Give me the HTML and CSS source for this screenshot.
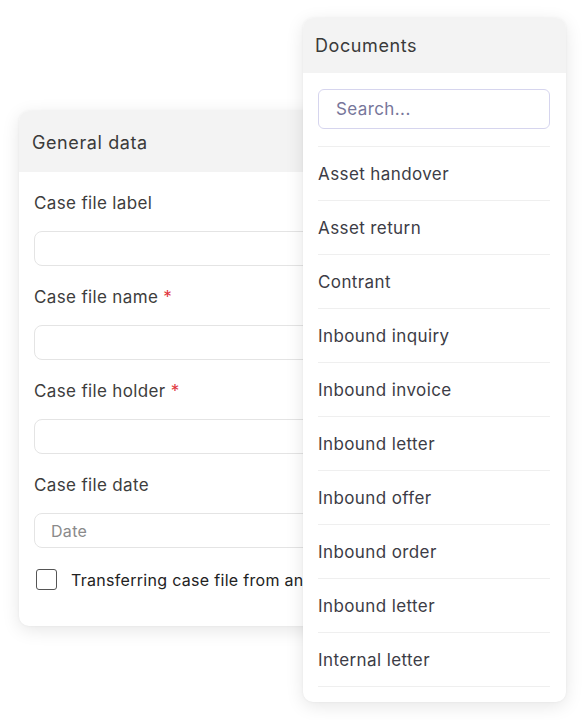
FILE: index.html
```html
<!DOCTYPE html>
<html>
<head>
<meta charset="utf-8">
<link rel="stylesheet" href="styles.css">
</head>
<body>
<div class="stage">
  <section class="card card-general">
    <header class="card-head">General data</header>
    <div class="card-body form">
      <div class="field">
        <label class="label">Case file label</label>
        <div class="input"></div>
      </div>
      <div class="field">
        <label class="label">Case file name <span class="req">*</span></label>
        <div class="input"></div>
      </div>
      <div class="field">
        <label class="label">Case file holder <span class="req">*</span></label>
        <div class="input"></div>
      </div>
      <div class="field">
        <label class="label">Case file date</label>
        <div class="input"><span class="placeholder">Date</span></div>
      </div>
      <div class="check-row">
        <span class="checkbox"></span>
        <span class="check-text">Transferring case file from an old system</span>
      </div>
    </div>
  </section>

  <section class="card card-docs">
    <header class="card-head">Documents</header>
    <div class="card-body docs">
      <div class="search"><span class="search-ph">Search...</span></div>
      <ul class="doc-list">
        <li>Asset handover</li>
        <li>Asset return</li>
        <li>Contrant</li>
        <li>Inbound inquiry</li>
        <li>Inbound invoice</li>
        <li>Inbound letter</li>
        <li>Inbound offer</li>
        <li>Inbound order</li>
        <li>Inbound letter</li>
        <li>Internal letter</li>
      </ul>
    </div>
  </section>
</div>
</body>
</html>
```

FILE: styles.css
```css
* { box-sizing: border-box; }
html, body { margin: 0; padding: 0; background: #ffffff; }
body {
  font-family: "Inter", "Noto Sans", sans-serif;
  color: #3b3b45;
  width: 584px;
  height: 720px;
  overflow: hidden;
}
.stage { position: relative; width: 584px; height: 720px; }

.card {
  position: absolute;
  background: #fff;
  border-radius: 10px;
  box-shadow: 0 4px 18px rgba(0,0,0,0.10), 0 0 3px rgba(0,0,0,0.05);
  overflow: hidden;
}
.card-head {
  background: #f3f3f3;
  font-size: 18px;
  letter-spacing: 0.6px;
  color: #3a3a3a;
  display: flex;
  align-items: center;
}

.card-general { left: 19px; top: 111px; width: 320px; height: 515px; }
.card-general .card-head { height: 61px; padding-left: 13px; padding-top: 1px; }
.form { padding: 19px 0 0 15px; display: flex; flex-direction: column; }
.field { display: flex; flex-direction: column; margin-bottom: 19px; }
.label { font-size: 17px; letter-spacing: 0.35px; color: #3d3d3d; line-height: 24px; margin-bottom: 16px; }
.req { color: #e0353b; }
.input {
  height: 35px;
  width: 320px;
  border: 1.5px solid #e4e4e4;
  border-radius: 8px;
  display: flex;
  align-items: center;
  padding-left: 16px;
}
.placeholder { font-size: 16px; letter-spacing: 0.3px; color: #8a8a8a; }
.check-row { display: flex; align-items: center; gap: 14px; margin-top: 2px; padding-left: 2px; }
.checkbox {
  width: 21px; height: 21px;
  border: 1.5px solid #555;
  border-radius: 3px;
  flex: none;
}
.check-text { font-size: 16px; letter-spacing: 0.3px; color: #222; white-space: nowrap; }

.card-docs { left: 303px; top: 18px; width: 263px; height: 684px; }
.card-docs .card-head { height: 55px; padding-left: 12px; }
.docs { padding: 16px 16px 0 15px; }
.search {
  height: 40px;
  border: 1.5px solid #d6d5ee;
  border-radius: 6px;
  display: flex;
  align-items: center;
  padding-left: 17px;
  margin-bottom: 17px;
}
.search-ph { font-size: 17px; letter-spacing: 0.4px; color: #77769a; }
.doc-list { list-style: none; margin: 0; padding: 0; border-top: 1.5px solid #efefef; }
.doc-list li {
  height: 54px;
  border-bottom: 1.5px solid #efefef;
  display: flex;
  align-items: center;
  font-size: 17px;
  letter-spacing: 0.4px;
  color: #3c3c46;
}
```
